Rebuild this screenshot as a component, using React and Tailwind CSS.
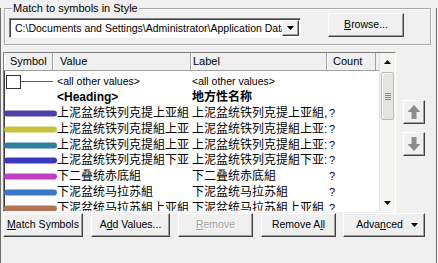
import React from 'react'

const rows = [
  { color: '#4e3fa6', value: '上泥盆统铁列克提上亚組, 下亚組', label: '上泥盆统铁列克提上亚組, 下亚組' },
  { color: '#c6c43c', value: '上泥盆统铁列克提組上亚:', label: '上泥盆统铁列克提組上亚:' },
  { color: '#2f7f9f', value: '上泥盆统铁列克提組上亚:', label: '上泥盆统铁列克提組上亚:' },
  { color: '#3838c0', value: '上泥盆统铁列克提組下亚:', label: '上泥盆统铁列克提組下亚:' },
  { color: '#c03fc0', value: '下二叠统赤底組', label: '下二叠统赤底組' },
  { color: '#3a78c6', value: '下泥盆统马拉苏組', label: '下泥盆统马拉苏組' },
  { color: '#b07656', value: '下泥盆统马拉苏組上亚組', label: '下泥盆统马拉苏組上亚組' },
]

const raised = 'bg-[#f0f0f0] border border-t-white border-l-white border-r-[#404040] border-b-[#404040] shadow-[inset_-1px_-1px_0_#a0a0a0]'

function Btn({ children, className = '', disabled }) {
  return (
    <button type="button"
      className={`flex items-center justify-center h-[24px] text-[10.5px] ${raised} ${disabled ? 'text-[#a0a0a0] [text-shadow:1px_1px_0_#fff]' : 'text-black'} ${className}`}>
      {children}
    </button>
  )
}

function Bar({ color }) {
  return (
    <svg width="53" height="15" viewBox="0 0 53 15" className="shrink-0">
      <line x1="3" y1="7.5" x2="50" y2="7.5" stroke={color} strokeWidth="6" strokeLinecap="round" />
    </svg>
  )
}

function FirstSymbol() {
  return (
    <svg width="53" height="15" viewBox="0 0 53 15" className="shrink-0">
      <rect x="2.5" y="1.5" width="14" height="13" fill="#fff" stroke="#303030" />
      <line x1="17" y1="7.5" x2="49" y2="7.5" stroke="#1f8f2a" strokeWidth="1" />
    </svg>
  )
}

function Arrow({ down }) {
  return (
    <svg width="20" height="22" viewBox="0 0 20 22">
      <g transform={down ? 'rotate(180 10 11)' : undefined} fill="#8c8c8c">
        <polygon points="10,4 3.5,11 16.5,11" />
        <rect x="7.5" y="11" width="5" height="7" />
      </g>
    </svg>
  )
}

export default function App() {
  return (
    <div className="w-[438px] h-[263px] bg-[#f0f0f0] overflow-hidden text-[10.5px] text-black font-[family-name:'Liberation_Sans','Noto_Sans_CJK_SC',sans-serif]">
      <div className="w-[437px] h-[260px] border-l border-r border-b border-[#707070]">
        {/* Style group */}
        <div className="relative mt-[8px] ml-[3px] w-[427px] h-[37px] border border-[#a8a8a8] shadow-[inset_1px_1px_0_#fff,1px_1px_0_#fff] flex items-start">
          <span className="absolute left-[7px] -top-[8px] px-[1px] bg-[#f0f0f0] leading-[14px] text-[11px]">Match to symbols in Style</span>
          <div className="ml-[4px] mt-[9px] w-[292px] h-[20px] flex bg-white border border-t-[#808080] border-l-[#808080] border-r-white border-b-white shadow-[inset_1px_1px_0_#404040]">
            <div className="flex-1 overflow-hidden whitespace-nowrap pl-[5px] pt-[2px] leading-[14px]">
              {'C:\\Documents and Settings\\Administrator\\Application Data\\ESRI'}
            </div>
            <div className={`w-[17px] h-[16px] mt-[1px] mr-[1px] flex items-center justify-center ${raised}`}>
              <svg width="7" height="4" viewBox="0 0 7 4"><polygon points="0,0 7,0 3.5,4" fill="#000" /></svg>
            </div>
          </div>
          <Btn className="ml-[27px] mt-[4px] w-[76px]"><span className="underline">B</span>rowse...</Btn>
        </div>

        {/* List + move buttons */}
        <div className="mt-[7px] ml-[2px] flex items-start">
          <div className="w-[393px] h-[160px] bg-white border border-t-[#808080] border-l-[#808080] border-r-white border-b-white shadow-[inset_1px_1px_0_#404040] flex overflow-hidden">
            <div className="w-[375px] shrink-0 overflow-hidden">
              <div className="flex h-[18px] bg-[#f0f0f0] border-b border-[#a0a0a0] leading-[17px] text-[11px]">
                <div className="w-[49px] pl-[6px] border-r border-[#a0a0a0] shadow-[inset_1px_0_0_#fff]">Symbol</div>
                <div className="w-[138px] pl-[7px] border-r border-[#a0a0a0] shadow-[inset_1px_0_0_#fff]">Value</div>
                <div className="w-[136px] pl-[2px] border-r border-[#a0a0a0] shadow-[inset_1px_0_0_#fff]">Label</div>
                <div className="w-[49px] pl-[6px] border-r border-[#a0a0a0] shadow-[inset_1px_0_0_#fff]">Count</div>
                <div className="flex-1" />
              </div>
              <div className="pt-[3px]">
                <div className="flex items-center h-[15.8px] leading-[15px]">
                  <FirstSymbol />
                  <div className="w-[135px] shrink-0 overflow-hidden whitespace-nowrap">{'<all other values>'}</div>
                  <div className="w-[135px] shrink-0 overflow-hidden whitespace-nowrap">{'<all other values>'}</div>
                </div>
                <div className="flex items-center h-[15.8px] leading-[15px] font-bold">
                  <div className="w-[53px] shrink-0" />
                  <div className="w-[135px] shrink-0 overflow-hidden whitespace-nowrap text-[12px]">{'<Heading>'}</div>
                  <div className="w-[135px] shrink-0 overflow-hidden whitespace-nowrap text-[12px]">地方性名称</div>
                </div>
                {rows.map((r, i) => (
                  <div key={i} className="flex items-center h-[15.8px] leading-[15px]">
                    <Bar color={r.color} />
                    <div className="w-[133px] shrink-0 overflow-hidden whitespace-nowrap text-[12px]">{r.value}</div>
                    <div className="w-[2px] shrink-0" />
                    <div className="w-[135px] shrink-0 overflow-hidden whitespace-nowrap text-[12px]">{r.label}</div>
                    <div className="pl-[2px] text-[11px]">?</div>
                  </div>
                ))}
              </div>
            </div>

            {/* vertical scrollbar */}
            <div className="w-[16px] shrink-0 flex flex-col bg-[#f4f4f1] border-l border-[#e2e2de]">
              <div className="h-[17px] flex items-center justify-center">
                <svg width="7" height="4" viewBox="0 0 7 4"><polygon points="3.5,0 7,4 0,4" fill="#000" /></svg>
              </div>
              <div className="mt-[2px] mx-[1px] h-[48px] rounded-[2px] border border-[#b8b8b4] bg-[#e4e4e0] shadow-[inset_1px_1px_0_#fff] flex flex-col items-center justify-center gap-[1px]">
                <div className="w-[6px] h-[1px] bg-[#888]" />
                <div className="w-[6px] h-[1px] bg-[#888]" />
                <div className="w-[6px] h-[1px] bg-[#888]" />
                <div className="w-[6px] h-[1px] bg-[#888]" />
              </div>
              <div className="flex-1" />
              <div className="h-[17px] flex items-center justify-center">
                <svg width="7" height="4" viewBox="0 0 7 4"><polygon points="0,0 7,0 3.5,4" fill="#000" /></svg>
              </div>
            </div>
          </div>

          <div className="ml-[7px] mt-[48px] flex flex-col">
            <div className={`w-[22px] h-[24px] flex items-center justify-center ${raised}`}><Arrow /></div>
            <div className={`mt-[8px] w-[22px] h-[24px] flex items-center justify-center ${raised}`}><Arrow down /></div>
          </div>
        </div>

        {/* bottom buttons */}
        <div className="mt-[1px] ml-[2px] flex">
          <Btn className="w-[80px]"><span className="underline">M</span>atch Symbols</Btn>
          <Btn className="ml-[8px] w-[79px]">A<span className="underline">d</span>d Values...</Btn>
          <Btn className="ml-[8px] w-[75px]" disabled><span className="underline">R</span>emove</Btn>
          <Btn className="ml-[8px] w-[75px]">Remove A<span className="underline">l</span>l</Btn>
          <Btn className="ml-[7px] w-[82px]">
            <span className="ml-[6px]">Adva<span className="underline">n</span>ced</span>
            <svg width="7" height="4" viewBox="0 0 7 4" className="ml-[8px]"><polygon points="0,0 7,0 3.5,4" fill="#000" /></svg>
          </Btn>
        </div>
      </div>
    </div>
  )
}
